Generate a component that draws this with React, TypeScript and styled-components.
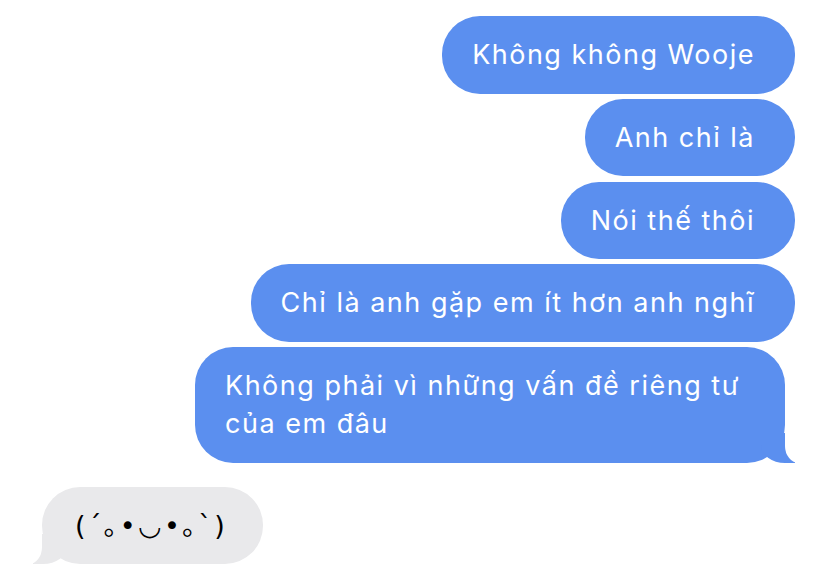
import styled, { createGlobalStyle } from "styled-components";

const GlobalStyle = createGlobalStyle`
	body {
		margin: 0;
		background: #ffffff;
		font-family: Inter, "Noto Sans", "Noto Sans CJK JP", sans-serif;
	}
`;

export const Thread = styled.div`
	display: flex;
	flex-direction: column;
	width: 828px;
	height: 582px;
	padding: 16px 33px 0 42px;
	box-sizing: border-box;
	overflow: hidden;
`;

export const Group = styled.div<{ $mine?: boolean }>`
	display: flex;
	flex-direction: column;
	align-items: ${(p) => (p.$mine ? "flex-end" : "flex-start")};
	gap: 5.3px;
	margin-bottom: ${(p) => (p.$mine ? "24px" : "0")};
`;

export const Bubble = styled.div<{ $mine?: boolean; $tail?: boolean }>`
	position: relative;
	max-width: 520px;
	padding: 20px ${(p) => (p.$mine ? "40px" : "36px")} 19.5px
		${(p) => (p.$mine ? "30px" : "33px")};
	margin-right: ${(p) => (p.$mine && p.$tail ? "10px" : "0")};
	border-radius: 38px;
	background: ${(p) => (p.$mine ? "#5b8fef" : "#e9e9eb")};
	color: ${(p) => (p.$mine ? "#ffffff" : "#000000")};
	font-size: 27px;
	line-height: 38px;
	letter-spacing: 1.5px;

	${(p) =>
		p.$tail &&
		(p.$mine
			? `
		&::before {
			content: "";
			position: absolute;
			bottom: 0;
			right: -10px;
			width: 34px;
			height: 30px;
			background: #5b8fef;
			border-bottom-left-radius: 24px 18px;
		}
		&::after {
			content: "";
			position: absolute;
			bottom: 0;
			right: -30px;
			width: 30px;
			height: 32px;
			background: #ffffff;
			border-bottom-left-radius: 14px 17px;
		}
	`
			: `
		&::before {
			content: "";
			position: absolute;
			bottom: 0;
			left: -9px;
			width: 34px;
			height: 30px;
			background: #e9e9eb;
			border-bottom-right-radius: 24px 18px;
		}
		&::after {
			content: "";
			position: absolute;
			bottom: 0;
			left: -30px;
			width: 30px;
			height: 32px;
			background: #ffffff;
			border-bottom-right-radius: 13px 17px;
		}
	`)}
`;

export const Text = styled.span`
	position: relative;
	z-index: 1;
`;

export const Kaomoji = styled.span`
	position: relative;
	z-index: 1;
	font-family: "DejaVu Sans", "Noto Sans CJK JP", sans-serif;
	font-size: 27px;
	letter-spacing: 2.4px;
`;

const sent = [
	"Không không Wooje",
	"Anh chỉ là",
	"Nói thế thôi",
	"Chỉ là anh gặp em ít hơn anh nghĩ",
	"Không phải vì những vấn đề riêng tư của em đâu",
];

export default function App() {
	return (
		<>
			<GlobalStyle />
			<Thread>
				<Group $mine>
					{sent.map((msg, i) => (
						<Bubble $mine $tail={i === sent.length - 1} key={i}>
							<Text>{msg}</Text>
						</Bubble>
					))}
				</Group>
				<Group>
					<Bubble $tail>
						<Kaomoji>(´｡•◡•｡`)</Kaomoji>
					</Bubble>
				</Group>
			</Thread>
		</>
	);
}
